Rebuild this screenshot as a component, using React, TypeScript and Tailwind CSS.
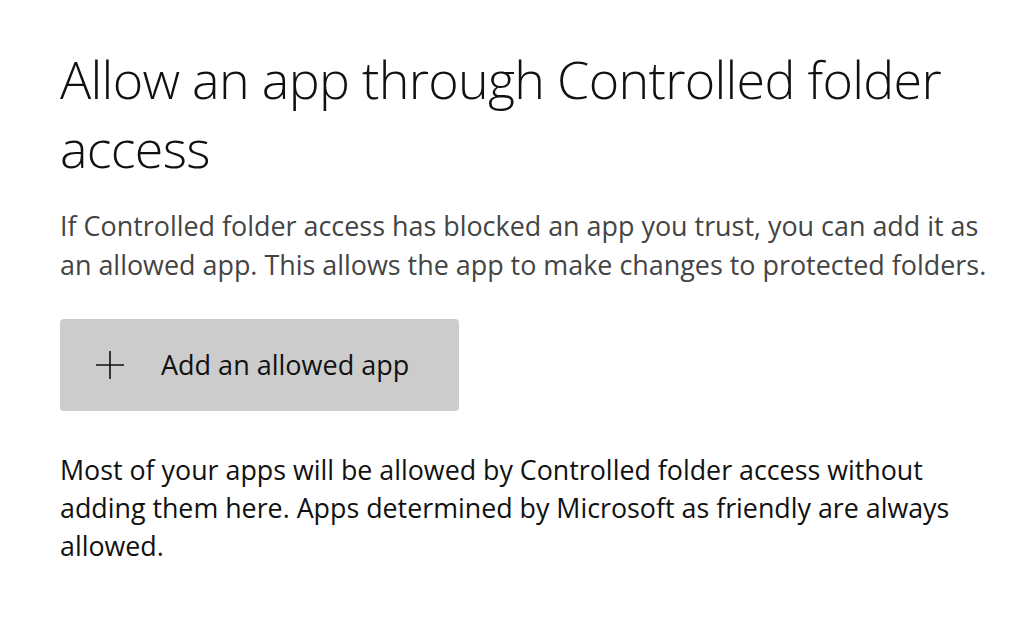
import React from "react";

export default function App() {
  return (
    <div className="w-[1024px] h-[618px] bg-white overflow-hidden" style={{ fontFamily: '"Open Sans", "Noto Sans", sans-serif' }}>
      <div className="pl-[60px] pt-[44px] pr-[20px]">
        <h1 className="text-[52px] leading-[69px] font-light text-[#111] tracking-[-0.7px]">
          Allow an app through Controlled folder access
        </h1>
        <p className="mt-[24px] text-[26.9px] leading-[39px] text-[#444] w-[950px]">
          If Controlled folder access has blocked an app you trust, you can add it as an allowed app. This allows the app to make changes to protected folders.
        </p>
        <button className="mt-[35px] w-[399px] h-[92px] bg-[#cccccc] rounded-[4px] flex items-center pl-[36px] gap-[37px]">
          <svg width="28" height="28" viewBox="0 0 28 28" fill="none" stroke="#111" strokeWidth="1.6">
            <path d="M14 0V28M0 14H28" />
          </svg>
          <span className="text-[27px] text-[#111]">Add an allowed app</span>
        </button>
        <p className="mt-[40px] text-[26.8px] leading-[38px] text-[#111] w-[900px]">
          Most of your apps will be allowed by Controlled folder access without adding them here. Apps determined by Microsoft as friendly are always allowed.
        </p>
      </div>
    </div>
  );
}
